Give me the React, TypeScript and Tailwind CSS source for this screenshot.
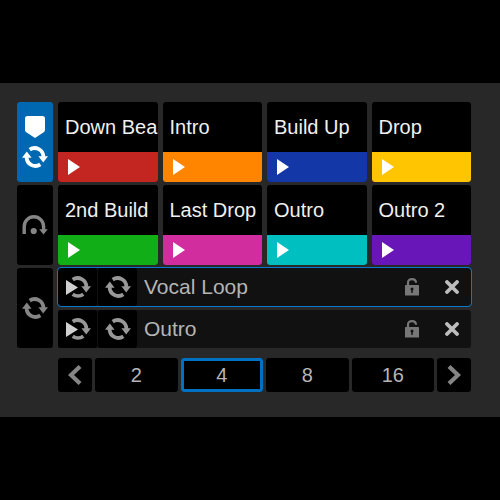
import React from "react";

interface Cue {
  name: string;
  color: string;
}

const cues: Cue[] = [
  { name: "Down Bea", color: "bg-[#c32620]" },
  { name: "Intro", color: "bg-[#ff8500]" },
  { name: "Build Up", color: "bg-[#1437a8]" },
  { name: "Drop", color: "bg-[#ffc500]" },
  { name: "2nd Build", color: "bg-[#12ae17]" },
  { name: "Last Drop", color: "bg-[#d22d9f]" },
  { name: "Outro", color: "bg-[#00bfc0]" },
  { name: "Outro 2", color: "bg-[#6816b8]" },
];

const loops = [
  { name: "Vocal Loop", active: true },
  { name: "Outro", active: false },
];

const beats = ["2", "4", "8", "16"];

function LoopIcon() {
  return (
    <svg width="26" height="22" viewBox="0 0 26 22" fill="none" aria-hidden="true">
      <path d="M7.7 3.6A8.8 8.8 0 0 1 21.4 11" stroke="currentColor" strokeWidth="3.8" />
      <path d="M18.3 18.4A8.8 8.8 0 0 1 4.6 11" stroke="currentColor" strokeWidth="3.8" />
      <path d="M16.4 10.2H26l-4.8 6.3z" fill="currentColor" />
      <path d="M0 11.8h9.6L4.8 5.500z" fill="currentColor" />
    </svg>
  );
}

function PlayLoopIcon() {
  return (
    <svg width="26" height="22" viewBox="0 0 26 22" fill="none" aria-hidden="true">
      <path d="M7.7 3.6A8.8 8.8 0 0 1 21.4 11" stroke="currentColor" strokeWidth="3.8" />
      <path d="M18.3 18.2A8.8 8.8 0 0 1 7.7 18.2" stroke="currentColor" strokeWidth="3.6" />
      <path d="M16.4 10.2H26l-4.8 6.3z" fill="currentColor" />
      <path d="M1 4v15l12-7.5z" fill="#d0d0d0" />
    </svg>
  );
}

function CueIcon() {
  return (
    <svg width="20" height="22" viewBox="0 0 20 22" fill="currentColor" aria-hidden="true">
      <path d="M2.5 0h15A2.5 2.5 0 0 1 20 2.5V14q0 1.5-1.3 2.3L10 22l-8.7-5.7Q0 15.5 0 14V2.5A2.5 2.5 0 0 1 2.5 0z" />
    </svg>
  );
}

function JumpIcon() {
  return (
    <svg width="26" height="20" viewBox="0 0 26 20" fill="none" aria-hidden="true">
      <path d="M2.2 19v-7.5a9.7 9.7 0 0 1 19.4 0V15" stroke="currentColor" strokeWidth="3.4" />
      <path d="M17.2 14.2h8.600L21.500 19.500z" fill="currentColor" />
      <circle cx="11.7" cy="16" r="3.1" fill="currentColor" />
    </svg>
  );
}

function UnlockIcon() {
  return (
    <svg width="14" height="18" viewBox="0 0 14 18" fill="none" aria-hidden="true">
      <path d="M3 8V4.500Q3 1.200 7 1.200T11 4.800" stroke="currentColor" strokeWidth="2.200" />
      <rect y="7" width="14" height="10.5" rx="0.5" fill="currentColor" />
      <circle cx="7" cy="11" r="1.5" fill="#111" />
      <path d="M6.3 11h1.4v4H6.3z" fill="#111" />
    </svg>
  );
}

function CloseIcon() {
  return (
    <svg width="14" height="14" viewBox="0 0 14 14" aria-hidden="true">
      <path d="M2 2l10 10M12 2L2 12" stroke="currentColor" strokeWidth="3.8" strokeLinecap="round" />
    </svg>
  );
}

function ChevronIcon({ flip = false }: { flip?: boolean }) {
  return (
    <svg width="14" height="20" viewBox="0 0 14 20" fill="none" className={flip ? "rotate-180" : ""} aria-hidden="true">
      <path d="M12 1.500L3 10l9 8.500" stroke="currentColor" strokeWidth="4.200" />
    </svg>
  );
}

export default function App() {
  return (
    <div className="min-h-screen bg-black pt-[83px] font-['Liberation_Sans',Arial,sans-serif]">
      <main className="bg-[#282828] pt-[19px] pr-[29px] pb-[25px] pl-[17px]">
        <div className="flex gap-[5px]">
          {/* Mode tabs */}
          <nav className="flex w-9 shrink-0 flex-col gap-[3px]">
            <button aria-label="Hot cues" className="flex h-20 flex-col items-center gap-2 rounded-[3px] bg-[#0067b1] pt-[14px] text-white">
              <CueIcon />
              <LoopIcon />
            </button>
            <button aria-label="Beat jump" className="flex h-20 items-center justify-center rounded-[3px] bg-black text-[#858585]">
              <JumpIcon />
            </button>
            <button aria-label="Loops" className="flex h-20 items-center justify-center rounded-[3px] bg-black text-[#858585]">
              <LoopIcon />
            </button>
          </nav>

          <div className="min-w-0 flex-1">
            {/* Cue pads */}
            <div className="grid grid-cols-4 gap-x-[5px] gap-y-[3px]">
              {cues.map((cue) => (
                <button key={cue.name} className="h-20 overflow-hidden rounded-[3px] bg-black text-left">
                  <span className="block h-[50px] pl-[7px] text-xl leading-[50px] whitespace-nowrap text-[#f0f0f0]">
                    {cue.name}
                  </span>
                  <span className={`flex h-[30px] items-center pl-[10px] ${cue.color}`}>
                    <svg width="12" height="16" viewBox="0 0 12 16" fill="#fff" aria-hidden="true">
                      <path d="M0 0v16l12-8z" />
                    </svg>
                  </span>
                </button>
              ))}
            </div>

            {/* Saved loops */}
            <ul className="mt-[3px] flex flex-col gap-1">
              {loops.map((loop) => (
                <li
                  key={loop.name}
                  className={`flex h-[38px] items-center gap-px rounded-[3px] bg-[#111] text-[#989898] ${loop.active ? "outline outline-[#0a78cc]" : ""}`}
                >
                  <button aria-label={`Play ${loop.name}`} className="flex h-full w-[39px] items-center justify-center rounded-[3px] bg-black">
                    <PlayLoopIcon />
                  </button>
                  <button aria-label={`Loop ${loop.name}`} className="flex h-full w-[39px] items-center justify-center rounded-[3px] bg-black">
                    <LoopIcon />
                  </button>
                  <span className="flex-1 pl-1.5 text-[21px] text-[#b5b5b5]">{loop.name}</span>
                  <button aria-label={`Lock ${loop.name}`} className="mr-[25px] text-[#777]">
                    <UnlockIcon />
                  </button>
                  <button aria-label={`Delete ${loop.name}`} className="mr-3 text-[#bdbdbd]">
                    <CloseIcon />
                  </button>
                </li>
              ))}
            </ul>

            {/* Loop length in beats */}
            <div className="mt-[10px] flex gap-[3px] text-xl text-[#b5b5b5]">
              <button aria-label="Shorter" className="flex h-[34px] w-[34px] items-center justify-center rounded-[3px] bg-black text-[#858585]">
                <ChevronIcon />
              </button>
              {beats.map((beat) => (
                <button
                  key={beat}
                  className={`h-[34px] flex-1 rounded-[3px] bg-black ${beat === "4" ? "inset-ring-3 inset-ring-[#0070c0]" : ""}`}
                >
                  {beat}
                </button>
              ))}
              <button aria-label="Longer" className="flex h-[34px] w-[34px] items-center justify-center rounded-[3px] bg-black text-[#858585]">
                <ChevronIcon flip />
              </button>
            </div>
          </div>
        </div>
      </main>
    </div>
  );
}
